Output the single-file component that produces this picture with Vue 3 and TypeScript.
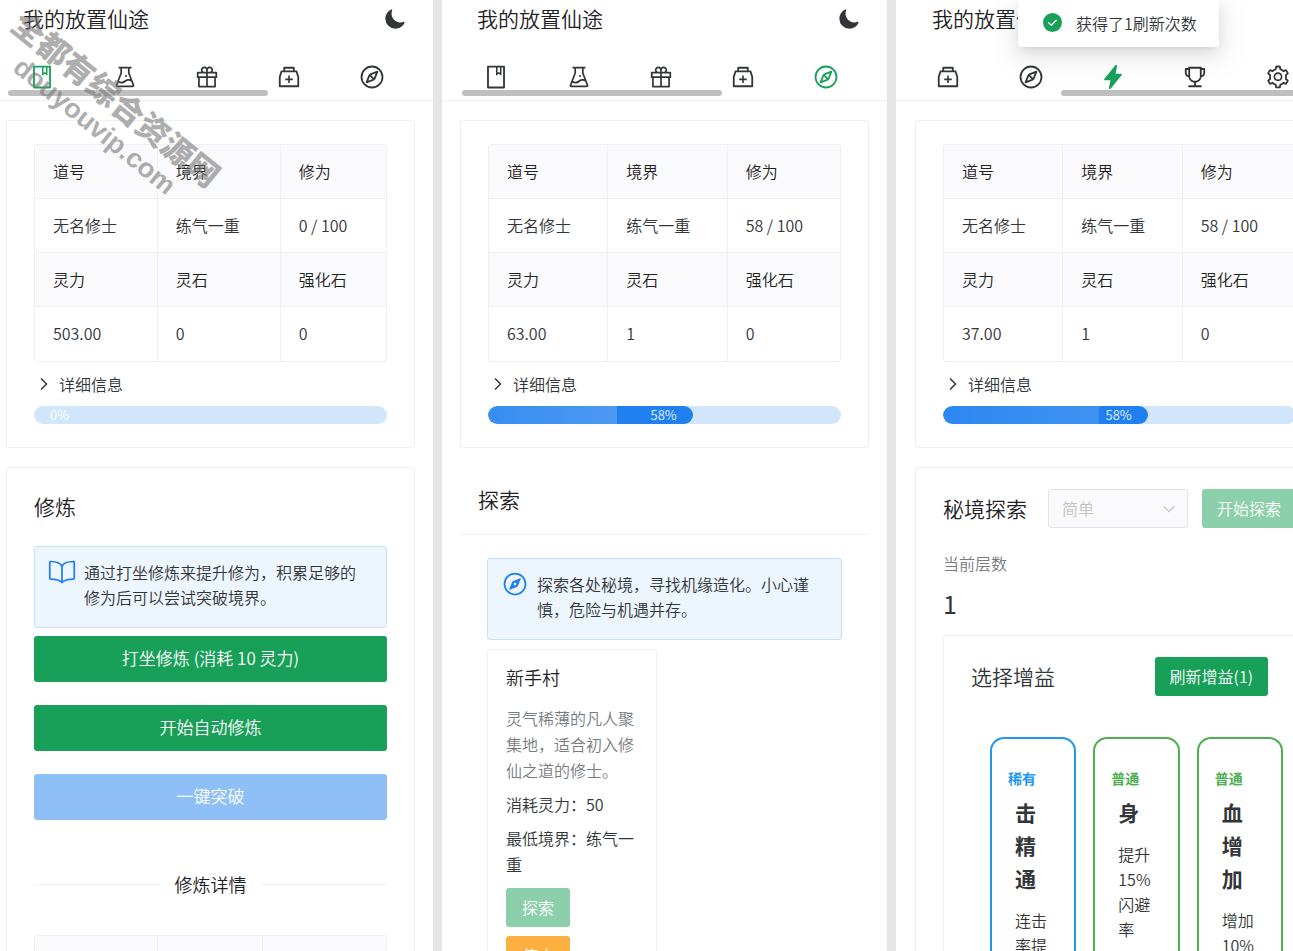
<script setup lang="ts">
interface Glyph {
  box: string
  fill?: string
  stroke?: string
}

const antBox = '0 0 1024 1024'
const ionBox = '0 0 512 512'

const glyphs: Record<string, Glyph> = {
  book: {
    box: antBox,
    fill: 'M832 64H192c-17.7 0-32 14.3-32 32v832c0 17.7 14.3 32 32 32h640c17.7 0 32-14.3 32-32V96c0-17.7-14.3-32-32-32zm-260 72h96v209.9L621.5 312L572 347.4V136zm220 752H232V136h280v296.9c0 3.3 1 6.6 3 9.3a15.9 15.9 0 0 0 22.3 3.7l83.8-59.9l81.4 59.4c2.7 2 6 3.1 9.4 3.1c8.8 0 16-7.2 16-16V136h64v752z',
  },
  flask: {
    box: antBox,
    fill: 'M512 472a40 40 0 1 0 80 0a40 40 0 1 0-80 0zm367 352.9L696.3 352V178H768v-68H256v68h71.7v174L145 824.9c-2.8 7.4-4.3 15.2-4.3 23.1c0 35.3 28.7 64 64 64h614.6c7.9 0 15.7-1.5 23.1-4.3c33-12.7 49.4-49.8 36.6-82.8zM395.7 364.7V180h232.6v184.7L719.2 600c-20.7-5.3-42.1-8-63.9-8c-61.2 0-119.2 21.5-165.3 60a188.78 188.78 0 0 1-121.3 43.9c-32.7 0-64.1-8.3-91.8-23.7l118.8-307.5zM210.5 844l41.7-107.8c35.7 18.1 75.4 27.8 116.6 27.8c61.2 0 119.2-21.5 165.3-60c33.9-28.2 76.3-43.9 121.3-43.9c35 0 68.4 9.5 97.6 27.1L813.5 844h-603z',
  },
  gift: {
    box: antBox,
    fill: 'M880 310H732.4c13.6-21.4 21.6-46.8 21.6-74c0-76.1-61.9-138-138-138c-41.4 0-78.7 18.4-104 47.4c-25.3-29-62.6-47.4-104-47.4c-76.1 0-138 61.9-138 138c0 27.2 7.9 52.6 21.6 74H144c-17.7 0-32 14.3-32 32v200c0 4.4 3.6 8 8 8h40v344c0 17.7 14.3 32 32 32h640c17.7 0 32-14.3 32-32V550h40c4.4 0 8-3.6 8-8V342c0-17.7-14.3-32-32-32zm-334-74c0-38.6 31.4-70 70-70s70 31.4 70 70s-31.4 70-70 70h-70v-70zm-138-70c38.6 0 70 31.4 70 70v70h-70c-38.6 0-70-31.4-70-70s31.4-70 70-70zM180 482V378h298v104H180zm48 68h250v308H228V550zm568 308H546V550h250v308zm48-376H546V378h298v104z',
  },
  medicine: {
    box: antBox,
    fill: 'M839.2 278.1a32 32 0 0 0-30.4-22.1H736V144c0-17.7-14.3-32-32-32H320c-17.7 0-32 14.3-32 32v112h-72.8a31.9 31.9 0 0 0-30.4 22.1L112 502v378c0 17.7 14.3 32 32 32h736c17.7 0 32-14.3 32-32V502l-72.8-223.9zM360 184h304v72H360v-72zm480 656H184V513.4L244.3 328h535.4L840 513.4V840zM652 572H544V464c0-4.4-3.6-8-8-8h-48c-4.4 0-8 3.6-8 8v108H372c-4.4 0-8 3.6-8 8v48c0 4.4 3.6 8 8 8h108v108c0 4.4 3.6 8 8 8h48c4.4 0 8-3.6 8-8V636h108c4.4 0 8-3.6 8-8v-48c0-4.4-3.6-8-8-8z',
  },
  compass: {
    box: '0 0 26 26',
    stroke: 'M13 2.5a10.5 10.5 0 1 0 0 21a10.5 10.5 0 1 0 0-21zM18.4 7.6l-7 2.8l-1 1l-2.8 7l7-2.8l1-1zM11.2 11.4l3.4 3.4',
  },
  flash: {
    box: ionBox,
    fill: 'M194.82 496a18.36 18.36 0 0 1-18.1-21.53v-.11L204.83 320H96a16 16 0 0 1-12.44-26.06L302.73 23a18.45 18.45 0 0 1 32.8 13.71c0 .3-.08.59-.13.89L307.19 192H416a16 16 0 0 1 12.44 26.06L209.24 489a18.45 18.45 0 0 1-14.42 7z',
  },
  trophy: {
    box: antBox,
    fill: 'M868 160h-92v-40c0-4.4-3.6-8-8-8H256c-4.4 0-8 3.6-8 8v40h-92a44 44 0 0 0-44 44v148c0 81.7 60 149.6 138.2 162C265.7 630.2 359 721.7 476 734.5v105.2H280c-17.7 0-32 14.3-32 32V904c0 4.4 3.6 8 8 8h512c4.4 0 8-3.6 8-8v-32.3c0-17.7-14.3-32-32-32H548V734.5C665 721.7 758.3 630.2 773.8 514C852 501.6 912 433.7 912 352V204a44 44 0 0 0-44-44zM184 352V232h64v207.6a91.99 91.99 0 0 1-64-87.6zm520 128c0 49.1-19.1 95.4-53.9 130.1c-34.8 34.8-81 53.9-130.1 53.9h-16c-49.1 0-95.4-19.1-130.1-53.9c-34.8-34.8-53.9-81-53.9-130.1V184h384v296zm136-128c0 41-26.9 75.8-64 87.6V232h64v120z',
  },
  gear: {
    box: antBox,
    fill: 'M924.8 625.7l-65.5-56c3.1-19 4.7-38.4 4.7-57.8s-1.6-38.8-4.7-57.8l65.5-56a32.03 32.03 0 0 0 9.3-35.2l-.9-2.6a443.74 443.74 0 0 0-79.7-137.9l-1.8-2.1a32.12 32.12 0 0 0-35.1-9.5l-81.3 28.9c-30-24.6-63.5-44-99.7-57.6l-15.7-85a32.05 32.05 0 0 0-25.8-25.7l-2.7-.5c-52.1-9.4-106.9-9.4-159 0l-2.7.5a32.05 32.05 0 0 0-25.8 25.7l-15.8 85.4a351.86 351.86 0 0 0-99 57.4l-81.9-29.1a32 32 0 0 0-35.1 9.5l-1.8 2.1a446.02 446.02 0 0 0-79.7 137.9l-.9 2.6c-4.5 12.5-.8 26.5 9.3 35.2l66.3 56.6c-3.1 18.8-4.6 38-4.6 57.1c0 19.2 1.5 38.4 4.6 57.1L99 625.5a32.03 32.03 0 0 0-9.3 35.2l.9 2.6c18.1 50.4 44.9 96.9 79.7 137.9l1.8 2.1a32.12 32.12 0 0 0 35.1 9.5l81.9-29.1c29.8 24.5 63.1 43.9 99 57.4l15.8 85.4a32.05 32.05 0 0 0 25.8 25.7l2.7.5a449.4 449.4 0 0 0 159 0l2.7-.5a32.05 32.05 0 0 0 25.8-25.7l15.7-85a350 350 0 0 0 99.7-57.6l81.3 28.9a32 32 0 0 0 35.1-9.5l1.8-2.1c34.8-41.1 61.6-87.5 79.7-137.9l.9-2.6c4.5-12.3.8-26.3-9.3-35zM788.3 465.9c2.5 15.1 3.8 30.6 3.8 46.1s-1.3 31-3.8 46.1l-6.6 40.1l74.7 63.9a370.03 370.03 0 0 1-42.6 73.6L721 702.8l-31.4 25.8c-23.9 19.6-50.5 35-79.3 45.8l-38.1 14.3l-17.9 97a377.5 377.5 0 0 1-85 0l-17.9-97.2l-37.8-14.5c-28.5-10.8-55-26.2-78.7-45.7l-31.4-25.9l-93.4 33.2c-17-22.9-31.2-47.6-42.6-73.6l75.5-64.5l-6.5-40c-2.4-14.9-3.7-30.3-3.7-45.5c0-15.3 1.2-30.6 3.7-45.5l6.5-40l-75.5-64.5c11.3-26.1 25.6-50.7 42.6-73.6l93.4 33.2l31.4-25.9c23.7-19.5 50.2-34.9 78.7-45.7l37.9-14.3l17.9-97.2c28.1-3.2 56.8-3.2 85 0l17.9 97l38.1 14.3c28.7 10.8 55.4 26.2 79.3 45.8l31.4 25.8l92.8-32.9c17 22.9 31.2 47.6 42.6 73.6L781.8 426l6.5 39.9zM512 326c-97.2 0-176 78.8-176 176s78.8 176 176 176s176-78.8 176-176s-78.8-176-176-176zm79.2 255.2A111.6 111.6 0 0 1 512 614c-29.9 0-58-11.7-79.2-32.8A111.6 111.6 0 0 1 400 502c0-29.9 11.7-58 32.8-79.2C454 401.6 482.1 390 512 390c29.9 0 58 11.6 79.2 32.8A111.6 111.6 0 0 1 624 502c0 29.9-11.7 58-32.8 79.2z',
  },
}

const tabNames: Record<string, string> = {
  book: '修炼',
  flask: '炼丹',
  gift: '抽奖',
  medicine: '背包',
  compass: '探索',
  flash: '秘境',
  trophy: '成就',
  gear: '设置',
}

interface Panel {
  key: 'train' | 'explore' | 'dungeon'
  tabs: string[]
  active: string
  cultivation: string
  spirit: string
  stones: string
  percent: number
  sheen: number
}

const panels: Panel[] = [
  { key: 'train', tabs: ['book', 'flask', 'gift', 'medicine', 'compass'], active: 'book', cultivation: '0 / 100', spirit: '503.00', stones: '0', percent: 0, sheen: 0 },
  { key: 'explore', tabs: ['book', 'flask', 'gift', 'medicine', 'compass'], active: 'compass', cultivation: '58 / 100', spirit: '63.00', stones: '1', percent: 58, sheen: 63 },
  { key: 'dungeon', tabs: ['medicine', 'compass', 'flash', 'trophy', 'gear'], active: 'flash', cultivation: '58 / 100', spirit: '37.00', stones: '1', percent: 58, sheen: 76 },
]

const buffs = [
  { rarity: '稀有', kind: 'rare', name: '击精通', text: '连击率提升' },
  { rarity: '普通', kind: 'common', name: '身', text: '提升15%闪避率' },
  { rarity: '普通', kind: 'common', name: '血增加', text: '增加10%血量' },
]
</script>

<template>
  <main class="board">
    <section v-for="p in panels" :key="p.key" class="panel" :class="p.key">
      <div class="inner">
        <header class="top">
          <div class="title-row">
            <h1>我的放置仙途</h1>
            <button class="icon-btn" aria-label="切换主题">
              <svg class="moon" viewBox="0 0 512 512"><path fill="currentColor" d="M264 480A232 232 0 0 1 32 248c0-94 54-178.28 137.61-214.67a16 16 0 0 1 21.06 21.06C181.07 76.43 176 104.66 176 136c0 110.28 89.72 200 200 200c31.34 0 59.57-5.07 81.61-14.67a16 16 0 0 1 21.06 21.06C442.28 426 358 480 264 480z" /></svg>
            </button>
          </div>
          <nav class="tabs">
            <button v-for="t in p.tabs" :key="t" class="icon-btn tab" :class="{ active: t === p.active }" :aria-label="tabNames[t]">
              <svg :viewBox="glyphs[t].box">
                <path v-if="glyphs[t].fill" fill="currentColor" :d="glyphs[t].fill" />
                <path v-else fill="none" stroke="currentColor" stroke-width="1.8" stroke-linejoin="round" :d="glyphs[t].stroke" />
              </svg>
            </button>
          </nav>
          <div class="scroll-thumb"></div>
        </header>

        <div class="body">
          <section class="card">
            <table class="info">
              <colgroup><col class="c1" /><col class="c2" /><col class="c3" /></colgroup>
              <tbody>
                <tr><th>道号</th><th>境界</th><th>修为</th></tr>
                <tr><td>无名修士</td><td>练气一重</td><td>{{ p.cultivation }}</td></tr>
                <tr><th>灵力</th><th>灵石</th><th>强化石</th></tr>
                <tr><td>{{ p.spirit }}</td><td>{{ p.stones }}</td><td>0</td></tr>
              </tbody>
            </table>
            <button class="collapse">
              <svg viewBox="0 0 18 18"><path d="M6 3.5L11.5 9L6 14.5" fill="none" stroke="currentColor" stroke-width="1.5" /></svg>
              <span>详细信息</span>
            </button>
            <div class="rail" role="progressbar" aria-label="修为进度" :aria-valuenow="p.percent">
              <div class="fill" :class="{ empty: p.percent === 0 }" :style="{ width: p.percent + '%' }">
                <div class="sheen" :style="{ width: p.sheen + '%' }"></div>
                <span>{{ p.percent }}%</span>
              </div>
            </div>
          </section>

          <section v-if="p.key === 'train'" class="card">
            <h2>修炼</h2>
            <div class="alert">
              <svg viewBox="0 0 512 512"><path fill="none" stroke="currentColor" stroke-width="32" stroke-linecap="round" stroke-linejoin="round" d="M256 160c16-63.16 76.43-95.41 208-96a15.94 15.94 0 0 1 16 16v288a16 16 0 0 1-16 16c-128 0-177.45 25.81-208 64-30.37-38-80-64-208-64-9.88 0-16-8.05-16-17.93V80a15.94 15.94 0 0 1 16-16c131.57.59 192 32.84 208 96zM256 160v288" /></svg>
              <p>通过打坐修炼来提升修为，积累足够的修为后可以尝试突破境界。</p>
            </div>
            <div class="actions">
              <button class="btn large">打坐修炼 (消耗 10 灵力)</button>
              <button class="btn large">开始自动修炼</button>
              <button class="btn large blue" disabled>一键突破</button>
            </div>
            <div class="divider"><span>修炼详情</span></div>
            <table class="info stats">
              <colgroup><col class="s1" /><col class="s2" /><col class="s3" /></colgroup>
              <tbody>
                <tr><th></th><th></th><th></th></tr>
              </tbody>
            </table>
          </section>

          <section v-else-if="p.key === 'explore'" class="explore-area">
            <h2 class="page-head">探索</h2>
            <div class="explore-body">
              <div class="alert">
                <svg viewBox="0 0 512 512"><circle cx="256" cy="256" r="192" fill="none" stroke="currentColor" stroke-width="32" /><path fill="currentColor" fill-rule="evenodd" d="M350.67 150.93l-117.2 46.88a64 64 0 0 0-35.66 35.66l-46.88 117.2a8 8 0 0 0 10.4 10.4l117.2-46.88a64 64 0 0 0 35.66-35.66l46.88-117.2a8 8 0 0 0-10.4-10.4zM256 280a24 24 0 1 1 24-24a24 24 0 0 1-24 24z" /></svg>
                <p>探索各处秘境，寻找机缘造化。小心谨慎，危险与机遇并存。</p>
              </div>
              <article class="place">
                <h3>新手村</h3>
                <p class="muted">灵气稀薄的凡人聚集地，适合初入修仙之道的修士。</p>
                <p>消耗灵力：50</p>
                <p>最低境界：练气一重</p>
                <div class="place-actions">
                  <button class="btn" disabled>探索</button>
                  <button class="btn orange">停止</button>
                </div>
              </article>
            </div>
          </section>

          <section v-else class="card dungeon-card">
            <div class="dungeon-head">
              <h2>秘境探索</h2>
              <div class="select">
                <select disabled aria-label="难度"><option>简单</option></select>
                <svg viewBox="0 0 18 18"><path d="M3 6l6 6l6-6" fill="none" stroke="currentColor" stroke-width="1.5" /></svg>
              </div>
              <button class="btn" disabled>开始探索</button>
            </div>
            <div class="stat-label">当前层数</div>
            <div class="stat-value">1</div>
            <section class="card choose">
              <div class="choose-head">
                <h2>选择增益</h2>
                <button class="btn">刷新增益(1)</button>
              </div>
              <div class="buffs">
                <article v-for="b in buffs" :key="b.name" class="buff" :class="b.kind">
                  <strong>{{ b.rarity }}</strong>
                  <h3>{{ b.name }}</h3>
                  <p>{{ b.text }}</p>
                </article>
              </div>
            </section>
          </section>
        </div>
      </div>

      <div v-if="p.key === 'dungeon'" class="toast" role="status">
        <svg viewBox="0 0 20 20"><circle cx="10" cy="10" r="10" fill="#18a058" /><path d="M6 10.2l2.7 2.7L14 7.6" fill="none" stroke="#fff" stroke-width="1.3" stroke-linecap="round" stroke-linejoin="round" /></svg>
        <span>获得了1刷新次数</span>
      </div>
      <div v-if="p.key === 'train'" class="watermark">
        <div>全都有综合资源网</div>
        <div class="site">douyouvip.com</div>
      </div>
    </section>
  </main>
</template>

<style>
html,
body {
  background: #e5e5e5;
}
</style>

<style scoped>
.board {
  display: grid;
  grid-template-columns: 433fr 445fr 397fr;
  gap: 9px;
  height: 100vh;
  overflow: hidden;
  background: #e5e5e5;
  font-family: "Noto Sans CJK SC", "Noto Sans", sans-serif;
  font-size: 16px;
  font-weight: 350;
  line-height: 26px;
  color: #333639;
}
.board *,
.board *::before,
.board *::after {
  box-sizing: border-box;
}
.panel {
  position: relative;
  min-width: 0;
  overflow: hidden;
  background: #fff;
  --edge: 18px;
}
.panel.train { --edge: 6px; }
.panel.dungeon { --edge: 19px; }
.panel.dungeon .inner { margin-right: -49px; }

h1, h2, h3, p { margin: 0; font-weight: inherit; }
h1, h2 {
  padding-bottom: 2px;
  font-size: 21px;
  line-height: 30px;
  color: #1f2225;
}
button, select { font: inherit; color: inherit; }
.icon-btn {
  display: grid;
  place-items: center;
  padding: 0;
  border: 0;
  background: none;
}
.top {
  padding: 0 18px 4px var(--edge);
  border-bottom: 1px solid #efeff5;
}
.title-row {
  display: flex;
  align-items: center;
  justify-content: space-between;
  height: 38px;
  padding: 0 9px 0 17px;
}
.moon { width: 22px; height: 22px; display: block; }
.tabs {
  display: grid;
  grid-template-columns: repeat(5, 1fr);
  margin: 26px 2px 0 -5px;
}
.dungeon .tabs { margin: 26px 5px 0 -8px; }
.tab svg { display: block; width: 26px; height: 26px; }
.tab.active { color: #18a058; }
.scroll-thumb {
  width: 260px;
  height: 6px;
  margin-left: 2px;
  border-radius: 3px;
  background: #bfbfbf;
}
.dungeon .scroll-thumb { margin-left: 146px; }

.body {
  display: flex;
  flex-direction: column;
  gap: 19px;
  padding: 19px 18px 24px var(--edge);
}
.card {
  padding: 23px 27px;
  border: 1px solid #efeff5;
  border-radius: 3px;
}
.info {
  width: 100%;
  table-layout: fixed;
  border-collapse: separate;
  border-spacing: 0;
  border: 1px solid #efeff5;
  border-radius: 3px;
  overflow: hidden;
}
.c1, .c2 { width: 34%; }
.train .c1, .train .c2 { width: 35%; }
.s1 { width: 35%; }
.s2 { width: 30%; }
.info th,
.info td {
  height: 54px;
  padding: 0 0 2px 18px;
  text-align: left;
  font-weight: inherit;
  border-right: 1px solid #efeff5;
  border-bottom: 1px solid #efeff5;
}
.info th { background: #fafafc; color: #1f2225; }
.info th:last-child,
.info td:last-child { border-right: 0; }
.info tr:last-child td { border-bottom: 0; }
.collapse {
  display: flex;
  align-items: center;
  gap: 5px;
  padding: 0;
  margin: 9px 0;
  border: 0;
  background: none;
}
.collapse svg { width: 20px; height: 18px; }
.rail {
  height: 18px;
  border-radius: 9px;
  background: #d2e6fb;
  overflow: hidden;
}
.fill {
  display: flex;
  align-items: center;
  justify-content: flex-end;
  position: relative;
  height: 18px;
  padding-right: 16px;
  border-radius: 9px;
  background: #2080f0;
  color: #e4f0fd;
  font-size: 13px;
  line-height: 18px;
  overflow: hidden;
}
.fill.empty {
  min-width: 60px;
  justify-content: flex-start;
  padding: 0 0 0 16px;
  background: none;
  color: #fff;
}
.sheen {
  position: absolute;
  inset: 0 auto 0 0;
  background: linear-gradient(90deg, rgba(255, 255, 255, 0.1), rgba(255, 255, 255, 0.2));
}
.dungeon .sheen { background: linear-gradient(90deg, rgba(255, 255, 255, 0.06), rgba(255, 255, 255, 0.14)); }
.fill span { position: relative; }

.alert {
  display: flex;
  align-items: flex-start;
  gap: 8px;
  padding: 11px 20px 17px 13px;
  border: 1px solid #c7dffb;
  border-radius: 3px;
  background: #edf5fe;
}
.alert svg {
  flex: none;
  width: 28px;
  height: 28px;
  color: #2080f0;
}
.alert p { padding-top: 2px; line-height: 25px; }
.train .alert { margin: 23px 0 8px; }
.actions {
  display: flex;
  flex-direction: column;
  gap: 23px;
}
.btn {
  height: 39px;
  padding: 0 15px 2px;
  border: 0;
  border-radius: 3px;
  background: #18a058;
  color: #fff;
  white-space: nowrap;
}
.btn.large { height: 46px; font-size: 17px; }
.btn:disabled { background: #8ccfab; }
.btn.blue:disabled { background: #8fbff7; }
.btn.orange { background: #fcb040; }
.place .btn { padding: 0 16px 2px; }
.divider {
  display: flex;
  align-items: center;
  gap: 14px;
  margin: 50px 0 37px;
  font-size: 18px;
  line-height: 28px;
  color: #1f2225;
}
.divider::before,
.divider::after {
  content: "";
  flex: 1;
  height: 1px;
  background: #efeff5;
}

.page-head {
  padding: 17px 18px 20px;
  border-bottom: 1px solid #efeff5;
}
.explore-body {
  display: flex;
  flex-direction: column;
  align-items: flex-start;
  gap: 9px;
  padding: 23px 27px;
}
.place {
  display: flex;
  flex-direction: column;
  gap: 8px;
  width: 48%;
  padding: 13px 18px;
  border: 1px solid #efeff5;
  border-radius: 3px;
}
.place h3 {
  margin-bottom: 6px;
  font-size: 18px;
  line-height: 28px;
  color: #1f2225;
}
.muted { color: #767c82; }
.place-actions {
  display: flex;
  flex-direction: column;
  align-items: flex-start;
  gap: 9px;
  padding-top: 3px;
}

.dungeon-card { padding-top: 21px; }
.dungeon-head { display: flex; align-items: center; }
.select {
  position: relative;
  flex: 1;
  margin: 0 14px 0 21px;
}
.select select {
  display: block;
  width: 100%;
  height: 39px;
  padding: 0 13px 2px;
  appearance: none;
  border: 1px solid #e4e4ea;
  border-radius: 3px;
  background: #fafafc;
  color: #c2c2c2;
  opacity: 1;
}
.select svg {
  position: absolute;
  top: 12px;
  right: 11px;
  width: 16px;
  height: 16px;
  color: #c8c8cc;
}
.stat-label { margin-top: 22px; color: #767c82; }
.stat-value {
  margin: 12px 0 17px;
  font-size: 25px;
  font-weight: 400;
  line-height: 30px;
}
.choose { padding-top: 21px; }
.choose-head {
  display: flex;
  align-items: center;
  justify-content: space-between;
}
.choose-head h2 { color: #333639; }
.buffs {
  display: grid;
  grid-template-columns: repeat(3, 1fr);
  gap: 17px;
  margin: 41px -15px 0 19px;
}
.buff {
  padding: 28px 23px;
  border: 2px solid #4caf50;
  border-radius: 14px;
}
.buff.rare { border-color: #2196f3; }
.buff strong {
  display: block;
  margin-left: -7px;
  font-size: 14px;
  font-weight: 700;
  line-height: 22px;
  white-space: nowrap;
  color: #4caf50;
}
.buff.rare strong { color: #2196f3; }
.buff h3 {
  margin: 7px 0 13px;
  font-size: 21px;
  font-weight: 700;
  line-height: 33px;
}
.buff p { line-height: 25px; }

.toast {
  position: absolute;
  top: 0;
  left: 122px;
  display: flex;
  align-items: center;
  gap: 14px;
  height: 47px;
  padding: 0 22px 2px 25px;
  border-radius: 0 0 3px 3px;
  background: #fff;
  box-shadow: 0 3px 6px -4px rgba(0, 0, 0, 0.12), 0 6px 16px rgba(0, 0, 0, 0.1), 0 9px 28px 8px rgba(0, 0, 0, 0.05);
  white-space: nowrap;
}
.toast svg { width: 19px; height: 19px; }
.watermark {
  position: absolute;
  top: 112px;
  left: 106px;
  transform: translate(-50%, -50%) rotate(39deg);
  font-size: 32px;
  font-weight: 900;
  line-height: 36px;
  text-align: center;
  white-space: nowrap;
  color: rgba(120, 120, 120, 0.6);
  pointer-events: none;
}
.site {
  font-family: "Liberation Sans", sans-serif;
  font-size: 27px;
}
</style>
